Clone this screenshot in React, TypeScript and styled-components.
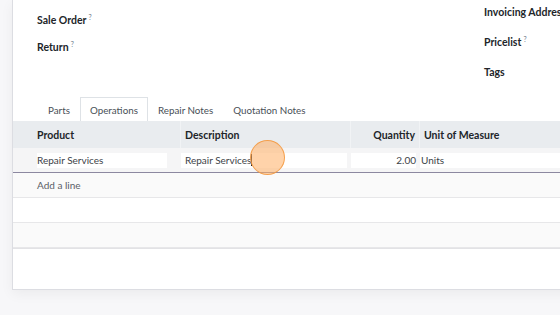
import React from "react";
import styled, { createGlobalStyle } from "styled-components";

const GlobalStyle = createGlobalStyle`
  html, body {
    margin: 0;
    padding: 0;
    background: #f7f7f9;
    overflow: hidden;
    font-family: Lato, "Open Sans", sans-serif;
    font-size: 10px;
    color: #212529;
  }
`;

const Page = styled.div`
  width: 560px;
  height: 315px;
  padding-left: 12px;
  box-sizing: border-box;
  overflow: hidden;
`;

const Card = styled.div`
  width: 620px;
  height: 290px;
  background: #fff;
  border-left: 1px solid #dcdde2;
  border-bottom: 1px solid #dcdde2;
  box-shadow: 0 4px 12px rgba(0, 0, 0, 0.05);
  box-sizing: border-box;
  display: flex;
  flex-direction: column;
`;

const Fields = styled.div`
  display: flex;
  height: 97px;
  padding-left: 24px;
`;

const FieldColumn = styled.div<{ $offset: number; $row: number; $width?: number }>`
  display: flex;
  flex-direction: column;
  margin-top: ${(p) => p.$offset}px;
  width: ${(p) => (p.$width ? `${p.$width}px` : "auto")};
  & > div {
    height: ${(p) => p.$row}px;
  }
`;

const Label = styled.div`
  display: flex;
  align-items: center;
  font-weight: 700;
  font-size: 10.5px;
  white-space: nowrap;
`;

const Help = styled.sup`
  font-size: 7px;
  font-weight: 400;
  color: #6f7a8a;
  margin-left: 2px;
  position: relative;
  top: -3px;
`;

const Tabs = styled.div`
  display: flex;
  padding-left: 25px;
  height: 24px;
`;

const Tab = styled.div<{ $active?: boolean }>`
  display: flex;
  align-items: center;
  padding: 0 9px;
  font-size: 9.8px;
  color: #495057;
  border: 1px solid ${(p) => (p.$active ? "#dee2e6" : "transparent")};
  border-bottom: none;
  background: ${(p) => (p.$active ? "#fff" : "transparent")};
  box-sizing: border-box;
`;

const Table = styled.div`
  display: flex;
  flex-direction: column;
`;

const Grid = styled.div`
  display: grid;
  grid-template-columns: 167px 170px 69px 1fr;
`;

const HeadRow = styled(Grid)`
  height: 27px;
  background: #e9ecef;
`;

const HeadCell = styled.div<{ $right?: boolean; $first?: boolean }>`
  display: flex;
  align-items: center;
  justify-content: ${(p) => (p.$right ? "flex-end" : "flex-start")};
  padding: ${(p) => (p.$first ? "0 0 0 24px" : "0 4px")};
  font-weight: 700;
  font-size: 10.5px;
  border-left: ${(p) => (p.$first ? "none" : "1px solid #f1f3f5")};
`;

const EditRow = styled(Grid)`
  position: relative;
  height: 25px;
  background: #f5f5f6;
  border-bottom: 1px solid #8c88a0;
  box-sizing: border-box;
`;

const Cell = styled.div<{ $first?: boolean }>`
  display: flex;
  align-items: center;
  padding: ${(p) => (p.$first ? "0 13px 0 24px" : "0 3px 0 1px")};
`;

const Input = styled.div<{ $right?: boolean; $pad?: number }>`
  flex: 1;
  height: 15px;
  background: #fff;
  display: flex;
  align-items: center;
  justify-content: ${(p) => (p.$right ? "flex-end" : "flex-start")};
  padding-left: ${(p) => p.$pad ?? 0}px;
  color: #3d4348;
  white-space: nowrap;
`;

const Caret = styled.span`
  display: inline-block;
  width: 1px;
  height: 12px;
  background: #222;
`;

const Pointer = styled.div`
  position: absolute;
  left: 237px;
  top: -8px;
  width: 33px;
  height: 33px;
  border-radius: 50%;
  background: rgba(255, 175, 100, 0.55);
  border: 1px solid rgba(243, 150, 60, 0.85);
`;

const BodyRow = styled.div<{ $shade?: boolean }>`
  height: 24px;
  display: flex;
  align-items: center;
  padding-left: 24px;
  background: ${(p) => (p.$shade ? "#fafafa" : "#fff")};
  border-bottom: 1px solid #e7e7e9;
  color: #5a6067;
`;

const TableEnd = styled.div`
  height: 2px;
  border-top: 1px solid #e2e2e5;
`;

export default function App() {
  return (
    <>
      <GlobalStyle />
      <Page>
        <Card>
          <Fields>
            <FieldColumn $offset={6} $row={27} $width={447}>
              <Label>
                Sale Order<Help>?</Help>
              </Label>
              <Label>
                Return<Help>?</Help>
              </Label>
            </FieldColumn>
            <FieldColumn $offset={-3} $row={30}>
              <Label>Invoicing Address</Label>
              <Label>
                Pricelist<Help>?</Help>
              </Label>
              <Label>Tags</Label>
            </FieldColumn>
          </Fields>
          <Tabs>
            <Tab>Parts</Tab>
            <Tab $active>Operations</Tab>
            <Tab>Repair Notes</Tab>
            <Tab>Quotation Notes</Tab>
          </Tabs>
          <Table>
            <HeadRow>
              <HeadCell $first>Product</HeadCell>
              <HeadCell>Description</HeadCell>
              <HeadCell $right>Quantity</HeadCell>
              <HeadCell>Unit of Measure</HeadCell>
            </HeadRow>
            <EditRow>
              <Cell $first>
                <Input>Repair Services</Input>
              </Cell>
              <Cell>
                <Input $pad={4}>
                  Repair Services
                  <Caret />
                </Input>
              </Cell>
              <Cell>
                <Input $right>2.00</Input>
              </Cell>
              <Cell>
                <Input $pad={1}>Units</Input>
              </Cell>
              <Pointer />
            </EditRow>
            <BodyRow $shade>Add a line</BodyRow>
            <BodyRow />
            <BodyRow $shade />
            <TableEnd />
          </Table>
        </Card>
      </Page>
    </>
  );
}
